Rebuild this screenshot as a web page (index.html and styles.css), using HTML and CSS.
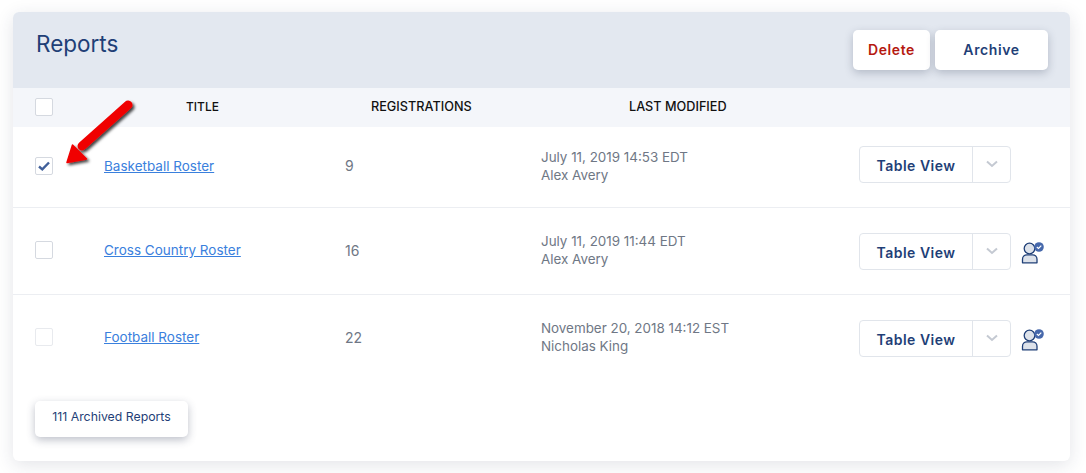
FILE: index.html
```html
<!DOCTYPE html>
<html lang="en">
<head>
<meta charset="utf-8">
<title>Reports</title>
<link rel="stylesheet" href="styles.css">
</head>
<body>
<main class="card">
  <header class="card-head">
    <h1 class="title">Reports</h1>
    <div class="actions">
      <button class="btn btn-delete">Delete</button>
      <button class="btn btn-archive">Archive</button>
    </div>
  </header>
  <div class="row thead">
    <span class="box"></span>
    <span class="th th-title">TITLE</span>
    <span class="th th-reg">REGISTRATIONS</span>
    <span class="th th-mod">LAST MODIFIED</span>
  </div>
  <div class="row r1">
    <span class="box checked"><svg viewBox="0 0 18 18" width="18" height="18"><path d="M4 9.500l3.300 2.800 6.700-6.800" fill="none" stroke="#41609a" stroke-width="2.400"/></svg></span>
    <a class="link" href="#">Basketball Roster</a>
    <span class="num">9</span>
    <div class="mod"><div>July 11, 2019 14:53 EDT</div><div>Alex Avery</div></div>
    <div class="split"><span class="split-main">Table View</span><span class="split-arrow"><svg viewBox="0 0 12 8" width="12" height="8"><path d="M1 1.500l5 4.500 5-4.500" fill="none" stroke="#c4c9d2" stroke-width="2"/></svg></span></div>
  </div>
  <div class="row r2">
    <span class="box"></span>
    <a class="link" href="#">Cross Country Roster</a>
    <span class="num">16</span>
    <div class="mod"><div>July 11, 2019 11:44 EDT</div><div>Alex Avery</div></div>
    <div class="split"><span class="split-main">Table View</span><span class="split-arrow"><svg viewBox="0 0 12 8" width="12" height="8"><path d="M1 1.500l5 4.500 5-4.500" fill="none" stroke="#c4c9d2" stroke-width="2"/></svg></span></div>
    <svg class="person" viewBox="0 0 24 23" width="24" height="23"><circle cx="8.500" cy="7.500" r="5.300" fill="#dde2ea" stroke="#1f3f77" stroke-width="1.300"/><path d="M1.500 21.800v-3.600c0-2.600 2-4.400 4.500-4.400h5.500c2.500 0 4.500 1.800 4.500 4.400v3.600z" fill="#dde2ea" stroke="#1f3f77" stroke-width="1.300" stroke-linejoin="round"/><circle cx="18" cy="6" r="4.800" fill="#4668ab"/><path d="M15.800 6l1.700 1.500 2.800-2.900" fill="none" stroke="#fff" stroke-width="1.200"/></svg>
  </div>
  <div class="row r3">
    <span class="box faint"></span>
    <a class="link" href="#">Football Roster</a>
    <span class="num">22</span>
    <div class="mod"><div>November 20, 2018 14:12 EST</div><div>Nicholas King</div></div>
    <div class="split"><span class="split-main">Table View</span><span class="split-arrow"><svg viewBox="0 0 12 8" width="12" height="8"><path d="M1 1.500l5 4.500 5-4.500" fill="none" stroke="#c4c9d2" stroke-width="2"/></svg></span></div>
    <svg class="person" viewBox="0 0 24 23" width="24" height="23"><circle cx="8.500" cy="7.500" r="5.300" fill="#dde2ea" stroke="#1f3f77" stroke-width="1.300"/><path d="M1.500 21.800v-3.600c0-2.600 2-4.400 4.500-4.400h5.500c2.500 0 4.500 1.800 4.500 4.400v3.600z" fill="#dde2ea" stroke="#1f3f77" stroke-width="1.300" stroke-linejoin="round"/><circle cx="18" cy="6" r="4.800" fill="#4668ab"/><path d="M15.800 6l1.700 1.500 2.800-2.900" fill="none" stroke="#fff" stroke-width="1.200"/></svg>
  </div>
  <footer class="card-foot">
    <button class="btn-archived">111 Archived Reports</button>
  </footer>
</main>
<svg class="arrow" viewBox="0 0 90 80" width="90" height="80">
  <defs><filter id="sh" x="-30%" y="-30%" width="160%" height="160%"><feDropShadow dx="2" dy="2" stdDeviation="1.500" flood-color="#000" flood-opacity=".75"/></filter></defs>
  <g filter="url(#sh)">
    <path d="M68 6 22 47" stroke="#f00000" stroke-width="9" stroke-linecap="round" fill="none"/>
    <path d="M12.500 46 7 63.500 26.500 60z" fill="#f00000" stroke="#f00000" stroke-width="1.500" stroke-linejoin="round"/>
  </g>
</svg>
</body>
</html>
```
FILE: styles.css
```css
* { box-sizing: border-box; }
html, body { margin: 0; height: 100%; }
body {
  position: relative;
  padding: 12px 16px 12px 13px;
  background: #fff;
  font-family: "Inter", "Liberation Sans", sans-serif;
  overflow: hidden;
}
.card {
  width: 1057px;
  height: 449px;
  background: #fff;
  border-radius: 6px;
  box-shadow: 0 4px 18px rgba(40, 50, 80, .13);
  overflow: hidden;
}
.card-head {
  height: 76px;
  background: #e3e8f0;
  display: flex;
  justify-content: space-between;
  padding: 18px 22px 0 23px;
}
.title {
  margin: 0;
  font-size: 22.500px;
  line-height: 28px;
  font-weight: 400;
  color: #1f3f77;
}
.actions { display: flex; gap: 5px; }
.btn {
  height: 40px;
  border: 0;
  border-radius: 5px;
  background: #fff;
  font: 600 14px "Inter", "Liberation Sans", sans-serif;
  letter-spacing: .6px;
  padding: 0 0 2px;
  box-shadow: 0 3px 8px rgba(40, 50, 80, .25);
}
.btn-delete { width: 77px; color: #b5190f; }
.btn-archive { width: 113px; color: #1f3f77; }
.row {
  display: flex;
  align-items: center;
  padding-left: 22px;
  border-bottom: 1px solid #eceef2;
}
.row > .box { margin-bottom: 2px; }
.thead {
  height: 39px;
  background: #f4f6fa;
  border-bottom: 0;
  padding-bottom: 2px;
}
.thead > .box { margin-bottom: -1px; }
.th { font-size: 12.700px; font-weight: 500; color: #111; }
.th-title { margin-left: 133px; width: 185px; font-size: 12px; }
.th-reg { width: 258px; }
.box {
  flex: none;
  width: 18px;
  height: 18px;
  border: 1px solid #d5d9e0;
  border-radius: 2px;
  background: #fff;
  display: block;
}
.box svg { display: block; margin: -1px; }
.box.faint { border-color: #e8eaee; }
.link {
  flex: none;
  width: 241px;
  margin: 0 0 2px 51px;
  font-size: 13.500px;
  color: #3a80dd;
}
.num { flex: none; width: 196px; margin-bottom: 2px; font-size: 14px; color: #6f7785; }
.mod { flex: none; width: 318px; margin-bottom: 2px; font-size: 13.400px; line-height: 18px; color: #6f7785; }
.r1 { height: 81px; padding-bottom: 1px; }
.r1 .split { margin-bottom: 5px; }
.r2 { height: 87px; }
.r3 { height: 86px; border-bottom: 0; }
.split {
  flex: none;
  display: flex;
  width: 152px;
  height: 37px;
  border: 1px solid #e1e5eb;
  border-radius: 4px;
}
.split-main {
  width: 113px;
  text-align: center;
  line-height: 37px;
  font-size: 14px;
  font-weight: 600;
  letter-spacing: .5px;
  color: #1f3f77;
  border-right: 1px solid #e1e5eb;
}
.split-arrow { flex: 1; display: flex; align-items: center; justify-content: center; }
.person { flex: none; margin: 3px 0 0 10px; }
.card-foot { padding: 20px 22px; }
.btn-archived {
  display: block;
  width: 153px;
  height: 36px;
  border: 0;
  border-radius: 5px;
  background: #fff;
  font: 400 12.300px "Inter", "Liberation Sans", sans-serif;
  padding: 0 0 6px;
  color: #1f3f77;
  box-shadow: 0 3px 9px rgba(40, 50, 80, .3);
}
.arrow { position: absolute; left: 60px; top: 99px; }
```
